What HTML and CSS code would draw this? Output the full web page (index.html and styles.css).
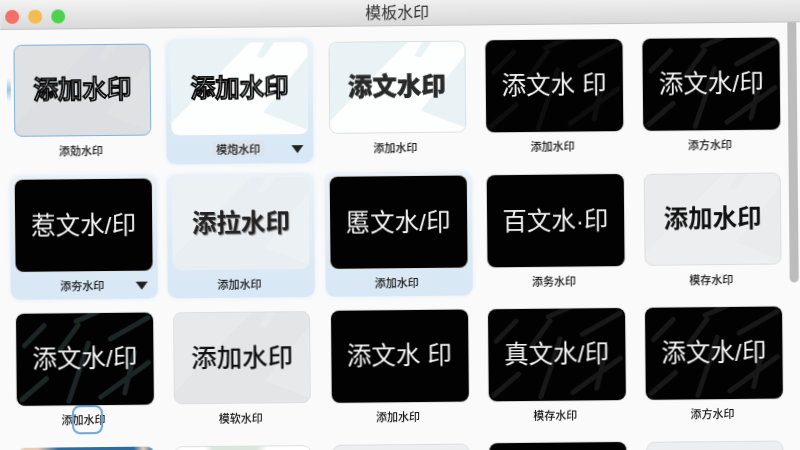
FILE: index.html
```html
<!DOCTYPE html>
<html lang="zh">
<head>
<meta charset="utf-8">
<title>模板水印</title>
<link rel="stylesheet" href="styles.css">
</head>
<body>
<svg class="defs" width="0" height="0" aria-hidden="true">
  <symbol id="streaks" viewBox="0 0 137 92" preserveAspectRatio="none">
    <g fill="none" stroke="currentColor" stroke-width="5" stroke-linecap="round">
      <path d="M5 86 L30 65"/>
      <path d="M52 88 Q62 60 72 30"/>
      <path d="M44 36 L62 12"/>
      <path d="M94 26 L132 5"/>
      <path d="M84 84 L132 50"/>
      <path d="M8 32 L28 12"/>
      <path d="M108 80 L118 40"/>
      <path d="M60 8 L84 -2"/>
    </g>
  </symbol>
  <symbol id="facets" viewBox="0 0 137 92" preserveAspectRatio="none">
    <path fill="currentColor" d="M0 0H79L0 80Z"/>
    <path fill="currentColor" d="M137 14L92 70L137 88Z"/>
    <path fill="currentColor" d="M94 0H104L92 16L86 14Z"/>
  </symbol>
</svg>
<div class="window">
  <header class="titlebar">
    <div class="lights"><i class="light red"></i><i class="light amber"></i><i class="light green"></i></div>
    <h1 class="title">模板水印</h1>
  </header>
  <div class="body">
    <main class="grid">
      <article class="cell">
        <i class="handle"></i>
        <div class="card grey focus"><svg class="bg soft"><use href="#facets"/></svg><span class="mark outline">添加水印</span></div>
        <div class="label"><span>添勀水印</span></div>
      </article>
      <article class="cell picked">
        <div class="card pale"><svg class="bg ice"><use href="#facets"/></svg><span class="mark outline">添加水印</span></div>
        <div class="label"><span class="hl">模炮水印</span><i class="caret"></i></div>
      </article>
      <article class="cell">
        <div class="card pale rim"><svg class="bg ice"><use href="#facets"/></svg><span class="mark heavy">添文水印</span></div>
        <div class="label"><span>添加水印</span></div>
      </article>
      <article class="cell">
        <div class="card dark"><svg class="bg faint"><use href="#streaks"/></svg><span class="mark thin">添文水 印</span></div>
        <div class="label"><span>添加水印</span></div>
      </article>
      <article class="cell">
        <div class="card dark"><svg class="bg mid"><use href="#streaks"/></svg><span class="mark thin">添文水/印</span></div>
        <div class="label"><span>添方水印</span></div>
      </article>

      <article class="cell picked">
        <div class="card dark"><span class="mark thin">惹文水/印</span></div>
        <div class="label"><span>添夯水印</span><i class="caret"></i></div>
      </article>
      <article class="cell picked">
        <div class="card mist"><svg class="bg mist-f"><use href="#facets"/></svg><span class="mark heavy2">添拉水印</span></div>
        <div class="label"><span>添加水印</span></div>
      </article>
      <article class="cell picked">
        <div class="card dark"><span class="mark thin">慝文水/印</span></div>
        <div class="label"><span>添加水印</span></div>
      </article>
      <article class="cell">
        <div class="card dark"><span class="mark thin">百文水·印</span></div>
        <div class="label"><span>添务水印</span></div>
      </article>
      <article class="cell">
        <div class="card silver rim"><svg class="bg silver-f"><use href="#facets"/></svg><span class="mark medium">添加水印</span></div>
        <div class="label"><span>模存水印</span></div>
      </article>

      <article class="cell">
        <div class="card dark"><svg class="bg teal"><use href="#streaks"/></svg><span class="mark thin">添文水/印</span></div>
        <div class="label"><span>添加水印</span><i class="ring"></i></div>
      </article>
      <article class="cell">
        <div class="card silver2 rim"><svg class="bg silver2-f"><use href="#facets"/></svg><span class="mark plain">添加水印</span></div>
        <div class="label"><span>模软水印</span></div>
      </article>
      <article class="cell">
        <div class="card dark"><span class="mark thin">添文水 印</span></div>
        <div class="label"><span>添加水印</span></div>
      </article>
      <article class="cell">
        <div class="card dark"><svg class="bg mid"><use href="#streaks"/></svg><span class="mark thin">真文水/印</span></div>
        <div class="label"><span>模存水印</span></div>
      </article>
      <article class="cell">
        <div class="card dark"><svg class="bg mid"><use href="#streaks"/></svg><span class="mark thin">添文水/印</span></div>
        <div class="label"><span>添方水印</span></div>
      </article>

      <article class="cell"><div class="card photo"></div></article>
      <article class="cell"><div class="card leaf rim"></div></article>
      <article class="cell"><div class="card silver rim"></div></article>
      <article class="cell"><div class="card dark"></div></article>
      <article class="cell"><div class="card silver rim"></div></article>
    </main>
    <aside class="track"><div class="thumb"></div></aside>
  </div>
</div>
</body>
</html>
```
FILE: styles.css
```css
* { box-sizing: border-box; }
html, body { margin: 0; height: 100%; overflow: hidden; background: #fafafa; }
.defs { display: block; height: 0; }
.window {
  width: 812px;
  height: 480px;
  display: flex;
  flex-direction: column;
  background: #fafafa;
  font-family: "Liberation Sans", "Noto Sans CJK SC", sans-serif;
  transform: rotate(-0.55deg);
  transform-origin: 0 0;
  filter: blur(0.45px);
}
.titlebar {
  height: 30px;
  flex: none;
  display: flex;
  align-items: center;
  justify-content: center;
  position: relative;
  padding-right: 18px;
  background: linear-gradient(#f3f3f3, #d9d9d9);
  border-bottom: 1px solid #c4c4c4;
}
.lights { position: absolute; left: 5px; top: 10px; display: flex; gap: 9px; }
.light { width: 14px; height: 14px; border-radius: 50%; display: block; }
.red { background: #f56f67; }
.amber { background: #f3bc50; }
.green { background: #4dd24f; }
.title { margin: 0; font-size: 16px; font-weight: 400; color: #333; font-family: "Noto Sans CJK SC", sans-serif; line-height: 22px; }
.body { flex: 1; display: flex; min-height: 0; }
.grid {
  width: 777px;
  flex: none;
  margin-left: 8px;
  padding-top: 10.5px;
  display: grid;
  grid-template-columns: repeat(5, 147px);
  grid-template-rows: 125.5px 123.5px 124px 124px;
  column-gap: 10.25px;
  row-gap: 10px;
}
.cell { position: relative; padding: 4px 5px 0; border-radius: 9px; }
.picked { background: linear-gradient(#eaf2f8, #dbe9f6 70%, #d9e8f6); box-shadow: 0 0 4px #e3edf6; }
.card {
  height: 92px;
  display: grid;
  place-items: center;
  border-radius: 8px;
  overflow: hidden;
}
.card > * { grid-area: 1 / 1; }
.bg { width: 100%; height: 100%; display: block; }
.mark { position: relative; font-family: "Noto Sans CJK SC", sans-serif; font-size: 24.5px; line-height: 30px; white-space: nowrap; margin-top: -4px; }
.grey { background: #dcdee1; }
.focus { border: 1.5px solid #7db2d8; }
.pale { background: #fdfefe; }
.rim { border: 1px solid #dcdfe0; }
.mist { background: #e8eef1; }
.silver { background: #eceeef; }
.silver2 { background: #e4e5e6; }
.dark { background: #020202; box-shadow: 0 0 0 1px #ddd; }
.photo { background: linear-gradient(90deg, #e8cdbd 0 15%, #2f6c9c 30% 85%, #e8cdbd 92%, #1e5f8f); }
.leaf { background: linear-gradient(90deg, #fff 0 22%, #dbe6dd 28% 60%, #fff 68%); }
.soft { color: #dfe1e3; }
.ice { color: #e9f3f6; }
.mist-f { color: #ecf1f3; }
.silver-f { color: #e9ebec; }
.silver2-f { color: #e8e9ea; }
.faint { color: #0e0e0e; }
.mid { color: #181818; }
.teal { color: #1c2626; }
.outline { color: #e8e8e8; font-weight: 500; -webkit-text-stroke: 1.8px #0a0a0a; text-shadow: 0 0 2px #fff; }
.heavy { color: #2a2a2a; font-weight: 900; -webkit-text-stroke: 0.4px #222; }
.heavy2 { color: #222; font-weight: 700; text-shadow: 1px 1px 1px #777; }
.medium { color: #111; font-weight: 700; }
.plain { color: #111; font-weight: 500; font-size: 25.5px; }
.thin {
  color: #f6f6f6;
  font-weight: 400;
  margin-top: 1px;
  font-family: "Liberation Sans", "Noto Sans CJK SC", sans-serif;
}
.label {
  position: relative;
  height: 16px;
  margin-top: 6px;
  padding-right: 4px;
  display: flex;
  justify-content: center;
  font-size: 11px;
  font-weight: 500;
  line-height: 16px;
  color: #151515;
  font-family: "Noto Sans CJK SC", sans-serif;
}
.hl { background: #dce3eb; padding: 0 4px; border-radius: 2px; }
.caret {
  position: absolute;
  right: 5px;
  top: 5px;
  width: 0;
  height: 0;
  border-left: 6px solid transparent;
  border-right: 6px solid transparent;
  border-top: 8px solid #222;
}
.ring {
  position: absolute;
  left: 55px;
  top: -6px;
  width: 31px;
  height: 29px;
  border: 2px solid #6fa6d8;
  border-radius: 8px;
}
.handle {
  position: absolute;
  left: -2px;
  top: 36px;
  width: 4px;
  height: 26px;
  background: linear-gradient(#fff, #9cc6e0 50%, #fff);
  border-radius: 3px 0 0 3px;
}
.track { flex: 1; padding-left: 2px; }
.thumb { width: 9px; height: 263px; margin-top: -3px; border-radius: 5px; background: #bcbcbc; }
```
